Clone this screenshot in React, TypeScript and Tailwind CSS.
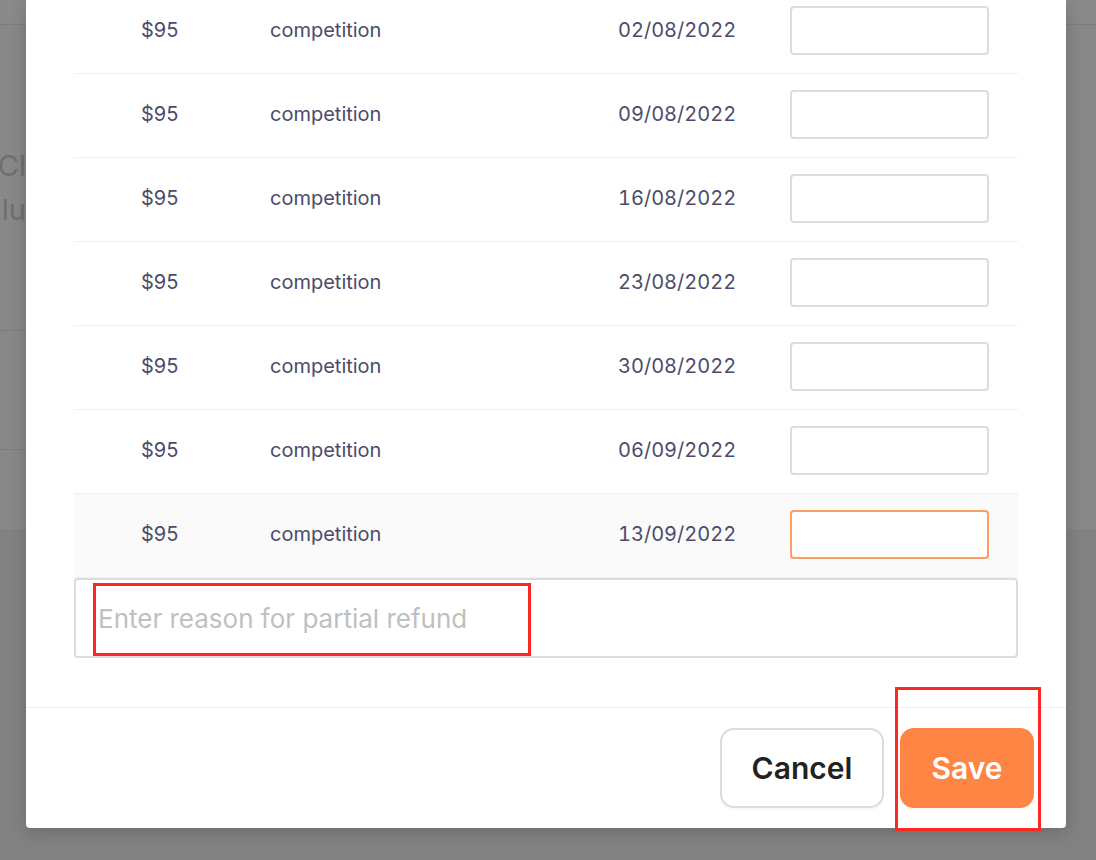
import React from "react";

const dates = [
  "02/08/2022",
  "09/08/2022",
  "16/08/2022",
  "23/08/2022",
  "30/08/2022",
  "06/09/2022",
  "13/09/2022",
];

export default function App() {
  return (
    <div
      className="relative w-[1096px] h-[860px] overflow-hidden bg-[#888888]"
      style={{ fontFamily: "Inter, 'Noto Sans', sans-serif" }}
    >
      {/* background page (under overlay) */}
      <div className="flex flex-col w-full h-full">
        <div className="h-[25px] bg-[#8a8a8a] border-b border-[#7c7c7c] shrink-0" />
        <div className="flex flex-col w-[26px] overflow-hidden">
          <div className="h-[306px] flex flex-col items-end pt-[119px] text-[29px] leading-[44px] text-[#6f6f6f] whitespace-nowrap border-b border-[#7c7c7c]">
            <div>Cl</div>
            <div>lu</div>
          </div>
          <div className="h-[119px] border-b border-[#7c7c7c]" />
        </div>
        <div className="h-[79px]" />
        <div className="flex-1 bg-[#828282]" />
      </div>

      {/* modal */}
      <div className="absolute left-[26px] top-0 w-[1040px] h-[828px] bg-white rounded-b-[4px] overflow-hidden flex flex-col justify-end shadow-[0_4px_18px_rgba(0,0,0,0.18)]">
        <div className="px-[48px] pb-[49px] shrink-0">
          {dates.map((d, i) => {
            const last = i === dates.length - 1;
            return (
              <div
                key={d}
                className={`h-[84px] flex items-center pb-[3px] border-b border-[#f0f0f0] text-[20px] text-[#4d4b6b] ${last ? "bg-[#fafafa]" : "bg-white"}`}
              >
                <div className="w-[196px] pl-[67px]">$95</div>
                <div className="w-[348px]">competition</div>
                <div className="w-[117px] text-right tabular-nums whitespace-nowrap">{d}</div>
                <div className="w-[55px]" />
                <div
                  className={`w-[199px] h-[49px] bg-white rounded-[4px] border-2 ${last ? "border-[#ff9c66]" : "border-[#dcdcdc]"}`}
                />
              </div>
            );
          })}
          <div className="h-[80px] border-2 border-[#dcdcdc] rounded-[4px] pl-[22px] pt-[23px] text-[26px] leading-[32px] text-[#c0c0c0]">
            Enter reason for partial refund
          </div>
        </div>
        <div className="border-t border-[#f0f0f0] h-[121px] shrink-0 flex items-center justify-end gap-[16px] pr-[32px]">
          <button className="w-[164px] h-[80px] rounded-[14px] border-2 border-[#dcdcdc] bg-white text-[30px] font-semibold text-[#222222] shadow-[0_2px_2px_rgba(0,0,0,0.03)]">
            Cancel
          </button>
          <button className="w-[134px] h-[80px] rounded-[14px] bg-[#ff8544] text-[30px] font-semibold text-white shadow-[0_2px_2px_rgba(0,0,0,0.04)]">
            Save
          </button>
        </div>
      </div>

      {/* annotation boxes */}
      <div className="absolute left-[93px] top-[583px] w-[438px] h-[73px] border-[3px] border-[#fa2a22]" />
      <div className="absolute left-[895px] top-[687px] w-[146px] h-[144px] border-[3px] border-[#fa2a22]" />
    </div>
  );
}
